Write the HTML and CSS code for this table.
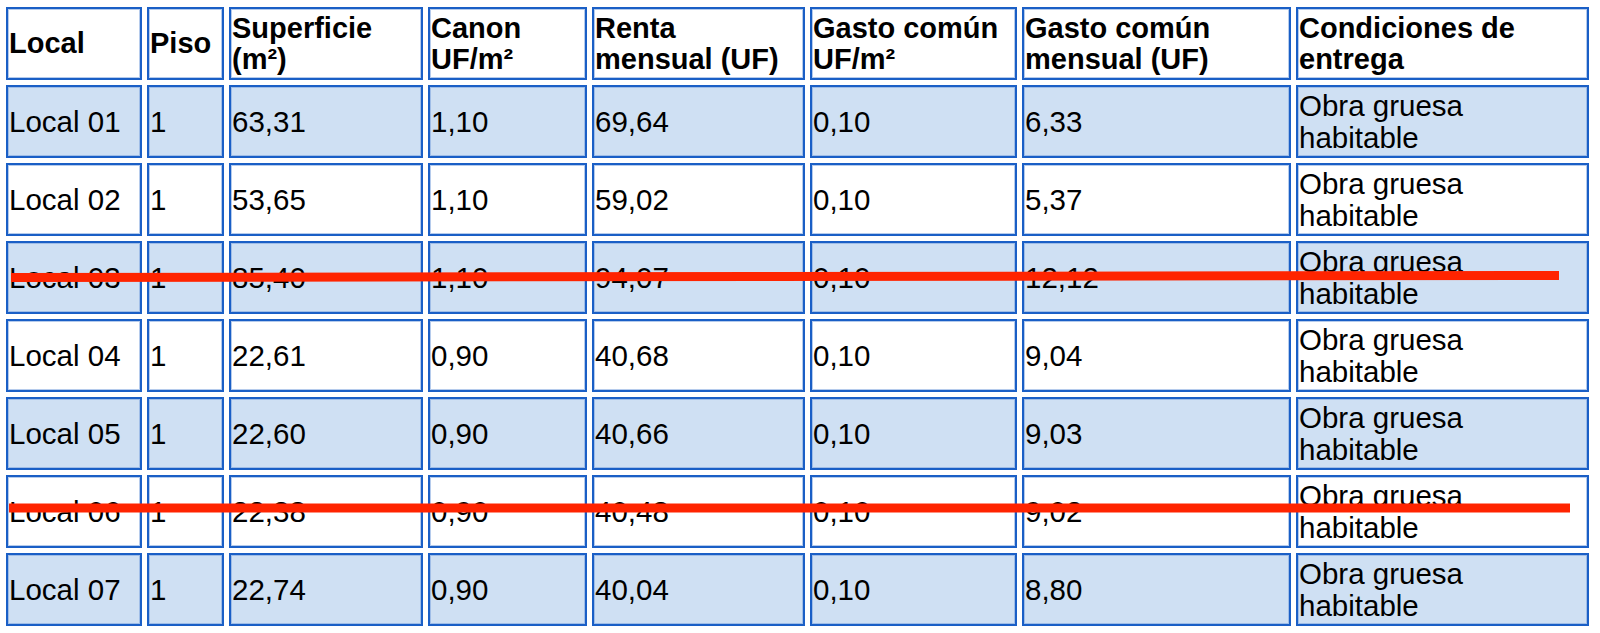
FILE: index.html
```html
<!DOCTYPE html>
<html lang="es">
<head>
<meta charset="utf-8">
<title>Locales</title>
<link rel="stylesheet" href="styles.css">
</head>
<body>
<div class="wrap">
  <table class="locales">
    <colgroup>
      <col class="c1"><col class="c2"><col class="c3"><col class="c4"><col class="c5"><col class="c6"><col class="c7"><col class="c8">
    </colgroup>
    <thead>
      <tr>
        <th>Local</th>
        <th>Piso</th>
        <th>Superficie<br>(m²)</th>
        <th>Canon<br>UF/m²</th>
        <th>Renta<br>mensual (UF)</th>
        <th>Gasto común<br>UF/m²</th>
        <th>Gasto común<br>mensual (UF)</th>
        <th>Condiciones de<br>entrega</th>
      </tr>
    </thead>
    <tbody>
      <tr class="alt"><td>Local 01</td><td>1</td><td>63,31</td><td>1,10</td><td>69,64</td><td>0,10</td><td>6,33</td><td>Obra gruesa<br>habitable</td></tr>
      <tr><td>Local 02</td><td>1</td><td>53,65</td><td>1,10</td><td>59,02</td><td>0,10</td><td>5,37</td><td>Obra gruesa<br>habitable</td></tr>
      <tr class="alt"><td>Local 03</td><td>1</td><td>85,40</td><td>1,10</td><td>94,07</td><td>0,10</td><td>12,12</td><td>Obra gruesa<br>habitable</td></tr>
      <tr><td>Local 04</td><td>1</td><td>22,61</td><td>0,90</td><td>40,68</td><td>0,10</td><td>9,04</td><td>Obra gruesa<br>habitable</td></tr>
      <tr class="alt"><td>Local 05</td><td>1</td><td>22,60</td><td>0,90</td><td>40,66</td><td>0,10</td><td>9,03</td><td>Obra gruesa<br>habitable</td></tr>
      <tr><td>Local 06</td><td>1</td><td>22,38</td><td>0,90</td><td>40,48</td><td>0,10</td><td>9,02</td><td>Obra gruesa<br>habitable</td></tr>
      <tr class="alt"><td>Local 07</td><td>1</td><td>22,74</td><td>0,90</td><td>40,04</td><td>0,10</td><td>8,80</td><td>Obra gruesa<br>habitable</td></tr>
    </tbody>
  </table>
  <svg class="strikes" width="1600" height="633" viewBox="0 0 1600 633" aria-hidden="true">
    <line x1="11" y1="277.5" x2="1559" y2="275.5" class="strike"/>
    <line x1="9" y1="508" x2="1570" y2="508" class="strike"/>
  </svg>
</div>
</body>
</html>
```

FILE: styles.css
```css
html, body {
  margin: 0;
  padding: 0;
  background: #ffffff;
}

.wrap {
  position: relative;
  width: 1600px;
  height: 633px;
  overflow: hidden;
}

.locales {
  table-layout: fixed;
  border-collapse: separate;
  border-spacing: 5px;
  width: 1593px;
  margin: 2px 0 0 1px;
  font-family: "Liberation Sans", Arial, Helvetica, sans-serif;
  font-size: 29.5px;
  line-height: 32px;
  color: #000000;
}

.c1 { width: 136px; }
.c2 { width: 77px; }
.c3 { width: 194px; }
.c4 { width: 159px; }
.c5 { width: 213px; }
.c6 { width: 207px; }
.c7 { width: 269px; }
.c8 { width: 293px; }

.locales tr {
  height: 73px;
}

.locales th,
.locales td {
  box-sizing: border-box;
  border: 2px solid #1a5fc6;
  box-shadow: inset 0 0 0 1px rgba(120, 160, 220, 0.55);
  padding: 1px 1px;
  text-align: left;
  vertical-align: middle;
  white-space: nowrap;
  overflow: hidden;
}

.locales th {
  font-size: 29px;
  line-height: 31px;
  font-weight: bold;
  background: #ffffff;
}

.locales td {
  font-weight: normal;
  background: #ffffff;
}

.locales tr.alt td {
  background: #cfe0f3;
}

.strikes {
  position: absolute;
  left: 0;
  top: 0;
  pointer-events: none;
}

.strike {
  stroke: #ff2400;
  stroke-width: 9;
}
```
